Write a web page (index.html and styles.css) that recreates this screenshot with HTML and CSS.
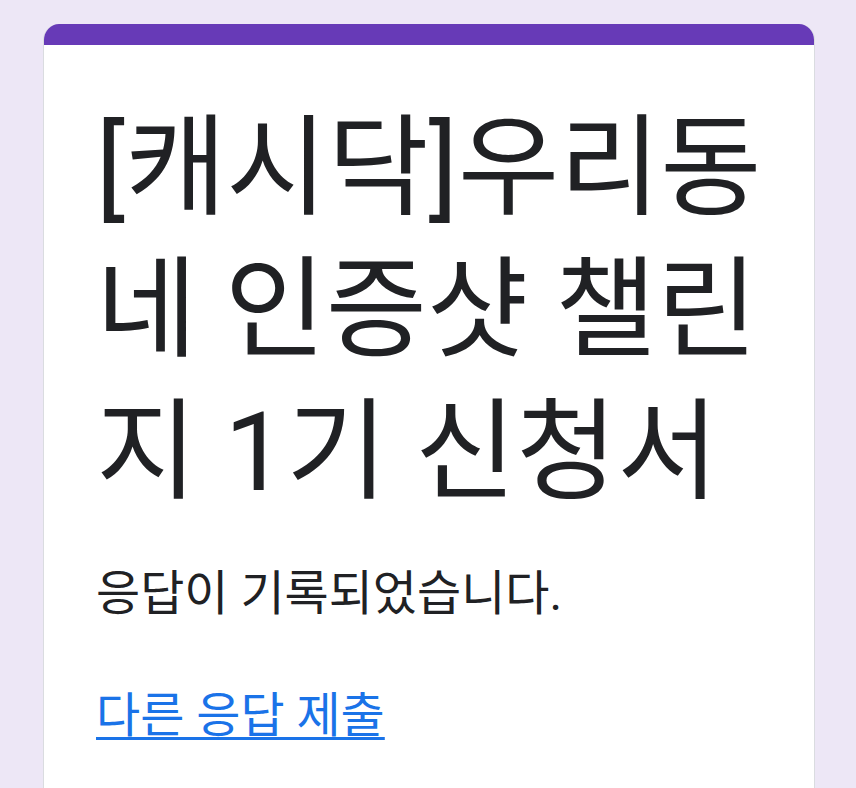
FILE: index.html
```html
<!DOCTYPE html>
<html lang="ko">
<head>
<meta charset="utf-8">
<title>[캐시닥]우리동네 인증샷 챌린지 1기 신청서</title>
<link rel="stylesheet" href="styles.css">
</head>
<body>
<div class="page">
  <div class="card">
    <div class="card-bar"></div>
    <div class="card-body">
      <h1 class="title">[캐시닥]우리동네 인증샷 챌린지 1기 신청서</h1>
      <p class="message">응답이 기록되었습니다.</p>
      <a class="link" href="#">다른 응답 제출</a>
    </div>
  </div>
</div>
</body>
</html>
```

FILE: styles.css
```css
html, body {
  margin: 0;
  padding: 0;
  background: #ede7f6;
  font-family: Roboto, "Noto Sans CJK KR", sans-serif;
  color: #202124;
}
.page {
  padding: 24px 0 0 43px;
}
.card {
  box-sizing: border-box;
  width: 772px;
  min-height: 800px;
  background: #ffffff;
  border: 1px solid #dadce0;
  border-top: none;
  border-radius: 16px 16px 0 0;
  overflow: hidden;
}
.card-bar {
  height: 21px;
  background: #673ab7;
}
.card-body {
  padding: 53px 48px 0 52px;
}
.title {
  margin: 0;
  font-size: 110px;
  line-height: 142px;
  font-weight: 400;
}
.message {
  margin: 38px 0 0 0;
  font-size: 48px;
  line-height: 64px;
}
.link {
  display: inline-block;
  margin-top: 58px;
  font-size: 48px;
  line-height: 64px;
  color: #1a73e8;
  text-decoration: underline;
  text-decoration-thickness: 3px;
  text-underline-offset: 5px;
}
```
